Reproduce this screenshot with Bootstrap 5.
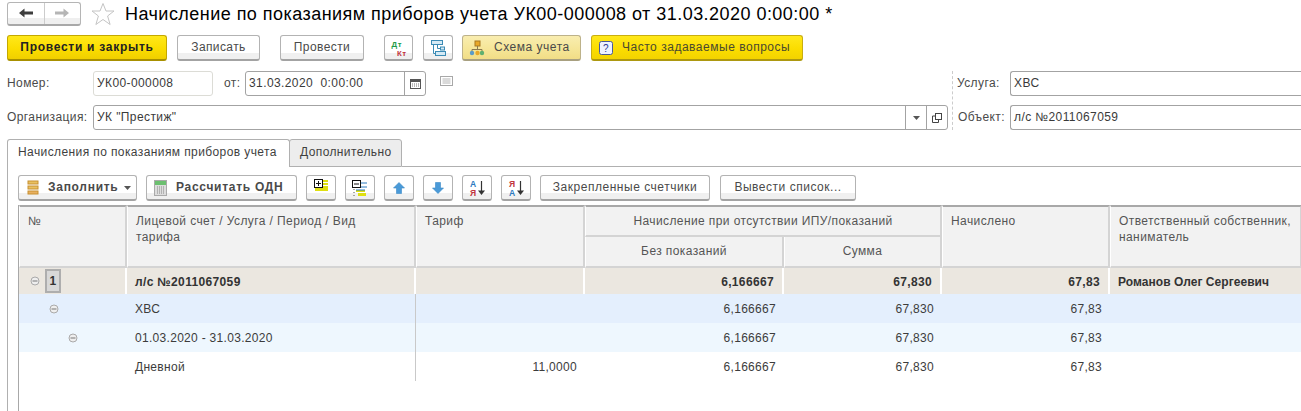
<!DOCTYPE html>
<html lang="ru">
<head>
<meta charset="utf-8">
<title>Начисление</title>
<link href="https://cdn.jsdelivr.net/npm/bootstrap@5.3.0/dist/css/bootstrap.min.css" rel="stylesheet">
<style>
html,body{margin:0;background:#fff;overflow:hidden}
body{width:1301px;height:411px;font:12px/15px "Liberation Sans",Arial,sans-serif;color:#4a4a4a;letter-spacing:.4px}
.head-row{height:26px;margin:0 0 9px 7px;padding-top:1px}
.nav-pair{width:74px;height:24px;border:1px solid #b5b5b5;border-bottom:2px solid #a8a8a8;border-radius:3px;background:linear-gradient(#fff 0 72%,#efefef 72%)}
.nav-pair span{flex:1;height:100%;display:flex;align-items:center;justify-content:center}
.nav-pair span+span{border-left:1px solid #ccc}
.star-ic{margin:0 10px 0 10px}
.page-title{font-size:18px;line-height:24px;color:#000;font-weight:400;margin:0;letter-spacing:.46px}
.act-row{height:26px;margin-left:7px;margin-bottom:10px}
.tb-btn{height:26px;border:1px solid #b3b3b3;border-bottom:2px solid #a3a3a3;border-radius:3px;background:linear-gradient(#fff 0 72%,#f0f0f0 72%);display:flex;align-items:center;justify-content:center;color:#4a4a4a;padding:0;flex:none;white-space:nowrap;font-size:12px;letter-spacing:.4px}
.tb-strong{font-weight:700;letter-spacing:.72px;justify-content:flex-start}
.tb-gold{background:linear-gradient(#ffe81a 0,#fbdd00 55%,#f0cf00 100%);border-color:#c4a800;border-bottom-color:#a89000;color:#222;font-weight:700;letter-spacing:.72px}
.tb-pale{background:linear-gradient(#f9edb0 0,#f5e596 60%,#f1dd86 100%);border-color:#bdb28a;border-bottom-color:#a8a080}
.tb-yellow{background:linear-gradient(#ffe81a 0,#fbdd00 55%,#f3d300 100%);border-color:#c9ae10;border-bottom-color:#ad9810;color:#4a4a30}
.tb-wide{letter-spacing:.52px}
.pad-l6{justify-content:flex-start;padding-left:6px}
.pad-l7{justify-content:flex-start;padding-left:7px}
.pad-l8{justify-content:flex-start;padding-left:8px}
.ic-gap{margin-right:9px;flex:none}
.caret-gap{margin-left:6px;flex:none}
.m9{margin-left:9px}.m10{margin-left:10px}.m20{margin-left:20px}
.w29{width:29px}.w30{width:30px}.w83{width:83px}.w84{width:84px}.w119{width:119px}.w136{width:136px}.w151{width:151px}.w160{width:160px}.w170{width:170px}.w212{width:212px}
.ic-top{align-items:flex-start;padding-top:3px}
.form-row-a{height:25px;margin-bottom:9px}
.fld-label{flex:none;padding-left:7px;line-height:25px}
.lb-93{width:93px}.lb-ot{width:32px;padding-left:11px}.lb-60{width:60px}.lb-62{width:62px;padding-left:10px}
.fld-box{height:25px;border:1px solid #a3a3a3;border-radius:3px;background:#fff;color:#3a3a3a;display:flex;align-items:center;padding-left:3px;flex:none;overflow:hidden}
.fld-soft{border-color:#dcdcd6;width:120px}
.fld-date{width:181px}
.fld-org{width:855px}
.fld-right{flex:1 1 0;border-right:0;border-radius:3px 0 0 3px}
.fld-cell{width:21px;height:100%;border-left:1px solid #a3a3a3;display:flex;align-items:center;justify-content:center;flex:none}
.note-ic{margin:5px 0 0 14px;flex:none}
.right-grp{width:351px;margin-left:auto;flex:none}
.sep-dash{position:absolute;left:952px;top:71px;height:59px;border-left:1px dashed #ccc}
.tab-strip{height:28px;margin-left:7px}
.tab-a,.tab-b{height:28px;line-height:25px;border:1px solid #b0b0b0;border-radius:3px 3px 0 0;padding-left:10px;flex:none;color:#3f3f3f}
.tab-a{width:283px;border-bottom:0;background:#fff;position:relative;z-index:1}
.tab-b{width:113px;margin-left:-1px;background:#ededed}
.tab-line{flex:1;border-bottom:1px solid #b0b0b0}
.panel-b{border-left:1px solid #b0b0b0;margin-left:7px;padding:8px 0 0 10px;height:244px}
.tools{height:26px;margin-bottom:4px}
.grid-wrap{border-left:1px solid #a8a8a8;height:206px;width:1284px;overflow:hidden}
.grid-tbl{table-layout:fixed;width:1283px;border-collapse:separate;border-spacing:0;margin:0;font-size:12px}
.grid-tbl col:nth-child(1){width:108px}.grid-tbl col:nth-child(2){width:289px}.grid-tbl col:nth-child(3){width:169px}.grid-tbl col:nth-child(4){width:199px}.grid-tbl col:nth-child(5){width:158px}.grid-tbl col:nth-child(6){width:168px}.grid-tbl col:nth-child(7){width:192px}
.grid-tbl th,.grid-tbl td{padding:0;border:0;box-shadow:none;background:transparent;color:#3c3c3c}
.grid-tbl thead th{background:#f2f2f2;font-weight:400;color:#555;border-top:0;vertical-align:top;padding:6px 8px 0;border-right:2px solid #d4d4d4;border-bottom:2px solid #d4d4d4;border-left:1px solid #fff;line-height:16px}
.grid-tbl thead tr:first-child{height:32px}
.grid-tbl thead tr:last-child{height:31px}
.grid-tbl thead tr:first-child th{border-top:2px solid #a8a8a8}
.grid-tbl thead th.tc{text-align:center;padding-left:0;padding-right:0}
.grid-tbl tbody td{height:29px;vertical-align:middle;padding:2px 8px 0;letter-spacing:.3px}
.grid-tbl tbody td.num{text-align:right}
.grid-tbl tbody td.b-line{border-right:1px solid #c9c9c9}
.grid-tbl .rw-a td{background:#ebe7e0;height:26px;font-weight:700;color:#333;letter-spacing:.35px}
.grid-tbl .rw-a td.gap{border-right:2px solid #fff}
.grid-tbl .rw-a td.tight{letter-spacing:.05px}
.grid-tbl .rw-b td{background:#e4effd}
.grid-tbl .rw-c td{background:#eef7fe}
.tree-cell{position:relative}
.tree-ic{position:absolute;top:50%;margin-top:-5px;width:10px;height:10px;display:block}
.lv1{left:11px}.lv2{left:30px}.lv3{left:49px}
.row-no{position:absolute;left:26px;top:1px;width:16px;height:24px;background:#d8d8d8;border:2px solid #aeaeae;text-align:center;line-height:20px}
.svg-t{font-family:"Liberation Sans",sans-serif;letter-spacing:.6px}
</style>
</head>
<body>
<div class="head-row d-flex align-items-center">
  <div class="nav-pair d-flex">
    <span><svg width="14" height="10" viewBox="0 0 14 10"><path d="M0 5 5.500 .5V3.600H14V6.400H5.500V9.500Z" fill="#3d3d3d"/></svg></span>
    <span><svg width="14" height="10" viewBox="0 0 14 10"><path d="M14 5 8.500 .5V3.600H0V6.400H8.500V9.500Z" fill="#b5b5b5"/></svg></span>
  </div>
  <svg class="star-ic" width="24" height="24" viewBox="0 0 24 24"><path d="M12 1.500 15 9h8l-6.400 5 2.500 8.500L12 17.500 4.900 22.500 7.400 14 1 9h8Z" fill="#fff" stroke="#c4c4c4"/></svg>
  <h1 class="page-title">Начисление по показаниям приборов учета УК00-000008 от 31.03.2020 0:00:00 *</h1>
</div>
<div class="act-row d-flex">
  <button class="tb-btn tb-gold w160">Провести и закрыть</button>
  <button class="tb-btn w83 m10">Записать</button>
  <button class="tb-btn w84 m20">Провести</button>
  <button class="tb-btn w29 m20"><svg width="20" height="18" viewBox="0 0 20 18" class="svg-t"><text x="2.500" y="8" font-size="7.800" font-weight="700" fill="#1d9a46">Дт</text><text x="8" y="17" font-size="7.800" font-weight="700" fill="#c0343c">Кт</text></svg></button>
  <button class="tb-btn w30 m10"><svg width="18" height="18" viewBox="0 0 18 18" fill="#d5eaf5" stroke="#3b8bb5"><rect x="2.500" y="1.500" width="11" height="4"/><rect x="6.500" y="12.500" width="10" height="4"/><path d="M4.500 5.500V14.500H6.500M8.500 5.500V9.500H12.500" fill="none"/><rect x="11.500" y="8" width="4" height="3"/></svg></button>
  <button class="tb-btn tb-pale tb-wide w119 m9 pad-l6"><svg width="16" height="16" viewBox="0 0 16 16" class="ic-gap"><rect x="6" y="1" width="5" height="5" fill="#e8a828" stroke="#a87820"/><path d="M8.500 6v3M3 13V9.500H13V13" fill="none" stroke="#8a7a50"/><circle cx="3" cy="13" r="2.200" fill="#5b9bc8"/><circle cx="8.500" cy="13" r="2.200" fill="#e8a828"/><circle cx="13" cy="13" r="2.200" fill="#5fb070"/></svg>Схема учета</button>
  <button class="tb-btn tb-yellow tb-wide w212 m10 pad-l7"><svg width="14" height="14" viewBox="0 0 14 14" class="ic-gap svg-t"><rect x=".5" y=".5" width="13" height="13" rx="2" fill="#eef2ff" stroke="#4a5a9a"/><text x="4" y="11" font-size="10" fill="#2a3a90">?</text></svg>Часто задаваемые вопросы</button>
</div>
<div class="form-row-a d-flex">
  <div class="fld-label lb-93">Номер:</div>
  <div class="fld-box fld-soft">УК00-000008</div>
  <div class="fld-label lb-ot">от:</div>
  <div class="fld-box fld-date"><span class="flex-grow-1">31.03.2020&nbsp; 0:00:00</span><span class="fld-cell"><svg width="11" height="11" viewBox="0 0 11 11"><rect x=".5" y="1.500" width="10" height="9" fill="#fff" stroke="#555"/><rect x="0" y="1" width="11" height="3" fill="#555"/><path d="M2 6h7M2 8h7" stroke="#777" stroke-dasharray="1 1"/></svg></span></div>
  <svg class="note-ic" width="13" height="10" viewBox="0 0 13 10"><rect x=".5" y=".5" width="12" height="9" fill="#fff" stroke="#a8a8a8"/><path d="M2.500 3h8M2.500 5h8M2.500 7h8" stroke="#b5b5b5"/></svg>
  <div class="right-grp d-flex">
    <div class="fld-label lb-60">Услуга:</div>
    <div class="fld-box fld-right">ХВС</div>
  </div>
</div>
<div class="sep-dash"></div>
<div class="form-row-a d-flex">
  <div class="fld-label lb-93">Организация:</div>
  <div class="fld-box fld-org"><span class="flex-grow-1">УК "Престиж"</span><span class="fld-cell"><svg width="7" height="4" viewBox="0 0 7 4"><path d="M0 0H7L3.500 4Z" fill="#555"/></svg></span><span class="fld-cell"><svg width="10" height="10" viewBox="0 0 10 10" fill="none" stroke="#444"><rect x="3.500" y=".5" width="6" height="6"/><path d="M3.500 3H.5V9.500H6.500V6.500"/></svg></span></div>
  <div class="fld-label lb-62">Объект:</div>
  <div class="fld-box fld-right">л/с №2011067059</div>
</div>
<div class="tab-strip d-flex">
  <div class="tab-a">Начисления по показаниям приборов учета</div>
  <div class="tab-b">Дополнительно</div>
  <div class="tab-line"></div>
</div>
<div class="panel-b">
  <div class="tools d-flex">
    <button class="tb-btn tb-strong w119 pad-l8"><svg width="12" height="15" viewBox="0 0 12 15" class="ic-gap"><rect x="1" y="1" width="10" height="3" fill="#e8c060" stroke="#c89030"/><rect x="1" y="6" width="10" height="3" fill="#e8c060" stroke="#c89030"/><rect x="1" y="11" width="10" height="3" fill="#e8b060" stroke="#c89030"/></svg>Заполнить<svg class="caret-gap" width="7" height="4" viewBox="0 0 7 4"><path d="M0 0H7L3.500 4Z" fill="#555"/></svg></button>
    <button class="tb-btn tb-strong w151 m9 pad-l7"><svg width="13" height="16" viewBox="0 0 13 16" class="ic-gap"><rect x=".5" y=".5" width="12" height="15" fill="#ddd" stroke="#aaa"/><rect x="1" y="1" width="11" height="4" fill="#6cc070"/><path d="M3 7h7M3 9h7M3 11h7M3 13h7" stroke="#888" stroke-dasharray="1 1"/></svg>Рассчитать ОДН</button>
    <button class="tb-btn w30 m9 ic-top"><svg width="14" height="12" viewBox="0 0 14 12"><path d="M9 1h5v2H9zM9 4h5v2H9zM9 7h5v2H9zM1 9h13v3H1z" fill="#dfdf10"/><rect x=".5" y=".5" width="8" height="8" fill="#fff" stroke="#111"/><path d="M2 4.500h5M4.500 2v5" stroke="#111"/></svg></button>
    <button class="tb-btn w30 m9"><svg width="16" height="16" viewBox="0 0 16 16"><path d="M4 10h9v2H4zM6 13h8v3H6z" fill="#dfdf10"/><rect x=".5" y=".5" width="8" height="7" fill="#fff" stroke="#111"/><path d="M2 4h5" stroke="#111"/><path d="M9 3h6M9 7h6M4 10h9" stroke="#2a7ac0"/><path d="M2 9v1M2 12v1M2 15v1" stroke="#555"/></svg></button>
    <button class="tb-btn w30 m9"><svg width="12" height="12" viewBox="0 0 12 12"><path d="M6 .5 11.500 6H8.500V11.500H3.500V6H.5Z" fill="#4a9ad8" stroke="#3a8ac8" stroke-width=".6"/></svg></button>
    <button class="tb-btn w30 m9"><svg width="12" height="12" viewBox="0 0 12 12"><path d="M6 11.500 11.500 6H8.500V.5H3.500V6H.5Z" fill="#4a9ad8" stroke="#3a8ac8" stroke-width=".6"/></svg></button>
    <button class="tb-btn w30 m9"><svg width="18" height="18" viewBox="0 0 18 18" class="svg-t" font-size="8.500" font-weight="700"><text x="2" y="8" fill="#2a7ac0">А</text><text x="2" y="17" fill="#c0343c">Я</text><path d="M13.500 2V12" stroke="#333" stroke-width="1.200"/><path d="M10 11.500H17L13.500 16Z" fill="#333"/></svg></button>
    <button class="tb-btn w30 m9"><svg width="18" height="18" viewBox="0 0 18 18" class="svg-t" font-size="8.500" font-weight="700"><text x="2" y="8" fill="#c0343c">Я</text><text x="2" y="17" fill="#2a7ac0">А</text><path d="M13.500 2V12" stroke="#333" stroke-width="1.200"/><path d="M10 11.500H17L13.500 16Z" fill="#333"/></svg></button>
    <button class="tb-btn tb-wide w170 m9">Закрепленные счетчики</button>
    <button class="tb-btn tb-wide w136 m10">Вывести список...</button>
  </div>
  <div class="grid-wrap">
    <table class="table grid-tbl">
      <colgroup><col><col><col><col><col><col><col></colgroup>
      <thead>
        <tr><th rowspan="2">№</th><th rowspan="2">Лицевой счет / Услуга / Период / Вид<br>тарифа</th><th rowspan="2">Тариф</th><th colspan="2" class="tc">Начисление при отсутствии ИПУ/показаний</th><th rowspan="2">Начислено</th><th rowspan="2">Ответственный собственник,<br>наниматель</th></tr>
        <tr><th class="tc">Без показаний</th><th class="tc">Сумма</th></tr>
      </thead>
      <tbody>
        <tr class="rw-a"><td class="tree-cell gap"><svg class="tree-ic lv1" viewBox="0 0 10 10"><circle cx="5" cy="5" r="4" fill="#eee" stroke="#aaa"/><path d="M2.500 5h5" stroke="#777"/></svg><span class="row-no">1</span></td><td class="gap">л/с №2011067059</td><td class="gap"></td><td class="num gap">6,166667</td><td class="num gap">67,830</td><td class="num gap">67,83</td><td class="tight">Романов Олег Сергеевич</td></tr>
        <tr class="rw-b"><td class="tree-cell"><svg class="tree-ic lv2" viewBox="0 0 10 10"><circle cx="5" cy="5" r="4" fill="#eee" stroke="#aaa"/><path d="M2.500 5h5" stroke="#777"/></svg></td><td class="b-line">ХВС</td><td></td><td class="num">6,166667</td><td class="num">67,830</td><td class="num">67,83</td><td></td></tr>
        <tr class="rw-c"><td class="tree-cell"><svg class="tree-ic lv3" viewBox="0 0 10 10"><circle cx="5" cy="5" r="4" fill="#eee" stroke="#aaa"/><path d="M2.500 5h5" stroke="#777"/></svg></td><td class="b-line">01.03.2020 - 31.03.2020</td><td></td><td class="num">6,166667</td><td class="num">67,830</td><td class="num">67,83</td><td></td></tr>
        <tr><td></td><td class="b-line">Дневной</td><td class="num">11,0000</td><td class="num">6,166667</td><td class="num">67,830</td><td class="num">67,83</td><td></td></tr>
      </tbody>
    </table>
  </div>
</div>
<script src="https://cdn.jsdelivr.net/npm/bootstrap@5.3.0/dist/js/bootstrap.bundle.min.js"></script>
</body>
</html>
